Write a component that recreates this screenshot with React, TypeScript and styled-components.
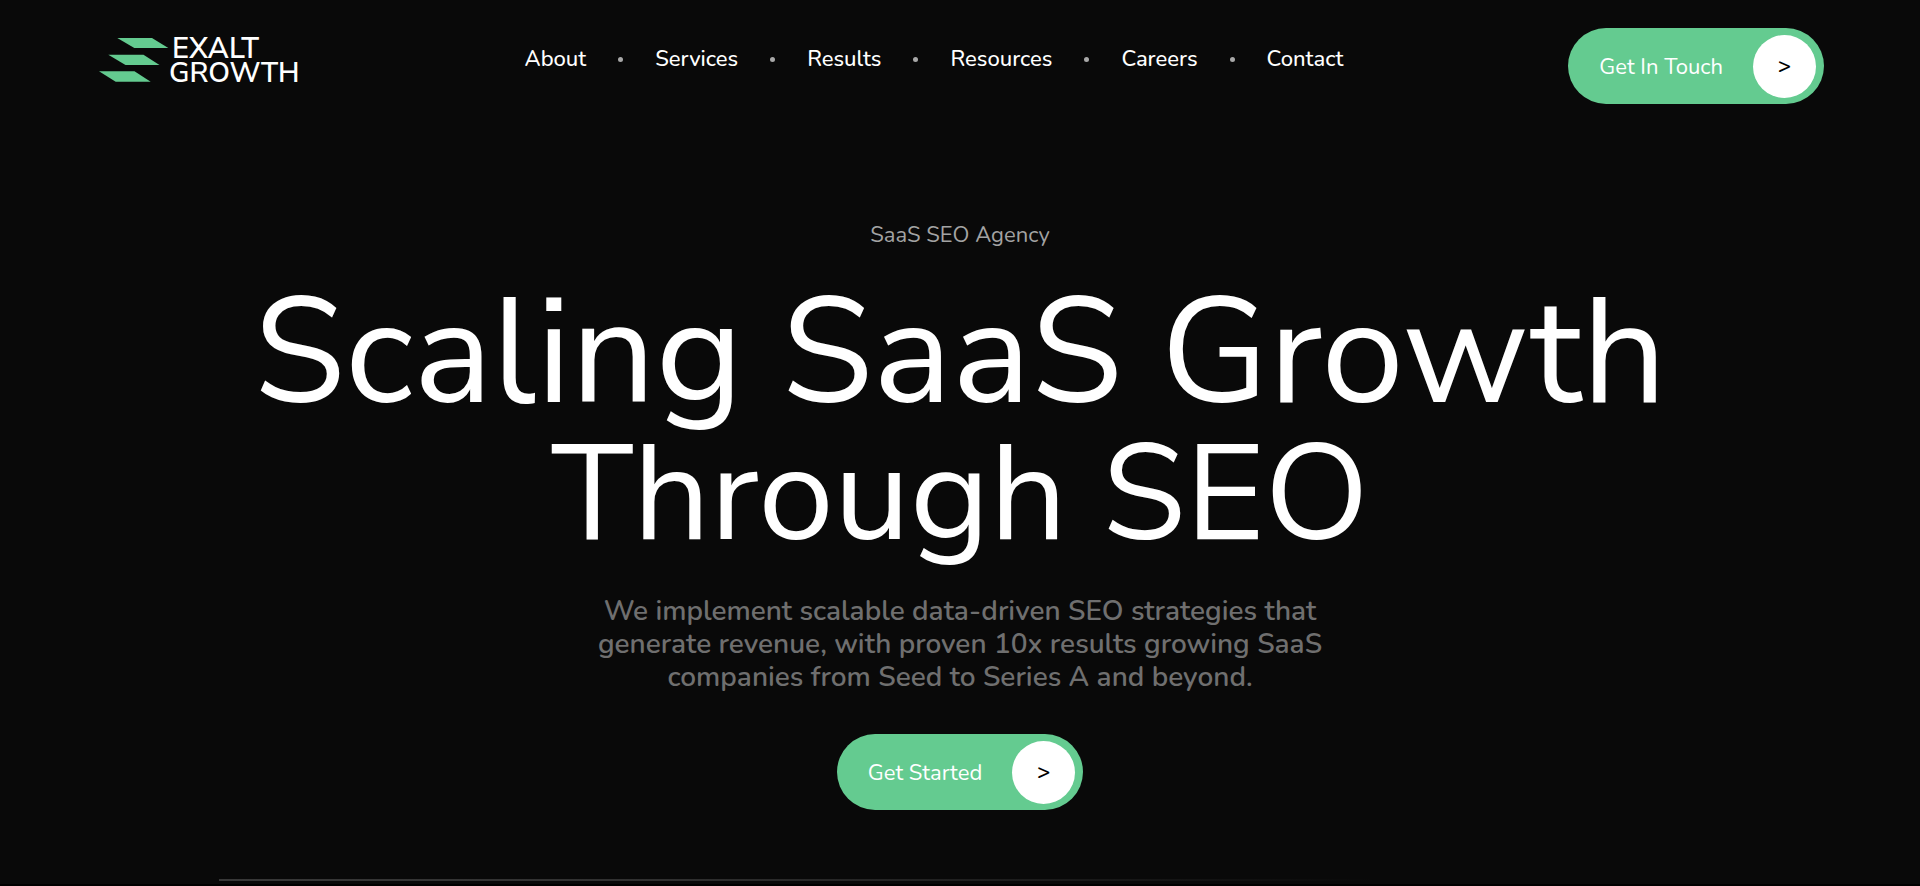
import React from "react";
import styled, { createGlobalStyle } from "styled-components";

const GlobalStyle = createGlobalStyle`
  * { box-sizing: border-box; }
  body {
    margin: 0;
    background: #090909;
    color: #fff;
    font-family: "Nunito Sans", Nunito, "Open Sans", "Noto Sans", sans-serif;
    overflow-x: hidden;
  }
`;

const Page = styled.div`
  border-bottom: 2px solid #000;
`;

const Header = styled.header`
  display: flex;
  align-items: flex-start;
  justify-content: space-between;
  padding: 28px 96px 0;
`;

const Logo = styled.a`
  display: flex;
  align-items: center;
  margin: 7px 0 0 3px;
  color: #fff;
  text-decoration: none;
`;

const Wordmark = styled.span`
  display: flex;
  flex-direction: column;
  padding-top: 2px;
  font-size: 28px;
  line-height: 24px;
  font-weight: 600;
`;

const WordTop = styled.span`
  padding-left: 3px;
  font-size: 29px;
`;

const NavList = styled.ul`
  display: flex;
  align-items: center;
  gap: 32px;
  margin: 0;
  padding: 16px 0 0;
  list-style: none;
`;

const NavItem = styled.li`
  display: flex;
  align-items: center;
  gap: 32px;

  &:not(:last-child)::after {
    content: "";
    width: 5px;
    height: 5px;
    border-radius: 50%;
    background: #a8a8a8;
  }
`;

const NavLink = styled.a`
  color: #fff;
  font-family: Nunito, "Nunito Sans", "Open Sans", sans-serif;
  font-size: 22px;
  line-height: 30px;
  font-weight: 500;
  text-decoration: none;
`;

const Pill = styled.button`
  display: flex;
  align-items: center;
  gap: 30px;
  height: 76px;
  padding: 0 8px 0 31px;
  border: 0;
  border-radius: 38px;
  background: #64cb90;
  color: #fff;
  font-family: Nunito, "Nunito Sans", "Open Sans", sans-serif;
  font-size: 22px;
  line-height: 30px;
  white-space: nowrap;
  cursor: pointer;
`;

const PillLabel = styled.span`
  padding-top: 2px;
`;

const PillArrow = styled.span`
  display: grid;
  place-items: center;
  width: 63px;
  height: 63px;
  border-radius: 50%;
  background: #fff;
  color: #000;
  font-weight: 600;
`;

const Hero = styled.main`
  display: flex;
  flex-direction: column;
  align-items: center;
  padding: 116px 96px 69px;
  text-align: center;
`;

const Eyebrow = styled.p`
  margin: 0 0 29px;
  color: #a3a3a3;
  font-family: Nunito, "Nunito Sans", "Open Sans", sans-serif;
  font-size: 22px;
  line-height: 30px;
`;

const Title = styled.h1`
  margin: 0 0 32px;
  font-weight: 400;
`;

const TitleLine = styled.span<{ $size: number; $leading: number }>`
  display: block;
  font-size: ${(p) => p.$size}px;
  line-height: ${(p) => p.$leading}px;
`;

const Lead = styled.p`
  max-width: 760px;
  margin: 0 0 40px;
  color: #6f6f6f;
  font-family: Nunito, "Nunito Sans", "Open Sans", sans-serif;
  font-size: 28px;
  line-height: 33px;
  font-weight: 600;
`;

const Rule = styled.hr`
  height: 2px;
  margin: 0 219px 3px;
  border: 0;
  background: linear-gradient(90deg, #383838, #303030 30%, #090909 78%);
`;

const links = ["About", "Services", "Results", "Resources", "Careers", "Contact"];

function CtaButton({ label }: { label: string }) {
  return (
    <Pill type="button">
      <PillLabel>{label}</PillLabel>
      <PillArrow aria-hidden="true">&gt;</PillArrow>
    </Pill>
  );
}

function LogoMark() {
  return (
    <svg width="70" height="44" viewBox="0 0 70 44" fill="#64cb90" aria-hidden="true">
      <path d="M18.3 0H53L69.3 10H35.3Z" />
      <path d="M9.3 16.7H44.5L60.5 27H26.5Z" />
      <path d="M0 33.3H35.5L51.7 43.8H16.7Z" />
    </svg>
  );
}

export default function App() {
  return (
    <Page>
      <GlobalStyle />
      <Header>
        <Logo href="#" aria-label="Exalt Growth">
          <LogoMark />
          <Wordmark>
            <WordTop>EXALT</WordTop>
            <span>GROWTH</span>
          </Wordmark>
        </Logo>
        <nav aria-label="Main">
          <NavList>
            {links.map((link) => (
              <NavItem key={link}>
                <NavLink href={`#${link.toLowerCase()}`}>{link}</NavLink>
              </NavItem>
            ))}
          </NavList>
        </nav>
        <CtaButton label="Get In Touch" />
      </Header>
      <Hero>
        <Eyebrow>SaaS SEO Agency</Eyebrow>
        <Title>
          <TitleLine $size={149} $leading={148}>Scaling SaaS Growth</TitleLine>
          <TitleLine $size={136} $leading={136}>Through SEO</TitleLine>
        </Title>
        <Lead>
          We implement scalable data-driven SEO strategies that generate revenue, with proven 10x
          results growing SaaS companies from Seed to Series A and beyond.
        </Lead>
        <CtaButton label="Get Started" />
      </Hero>
      <Rule />
    </Page>
  );
}
